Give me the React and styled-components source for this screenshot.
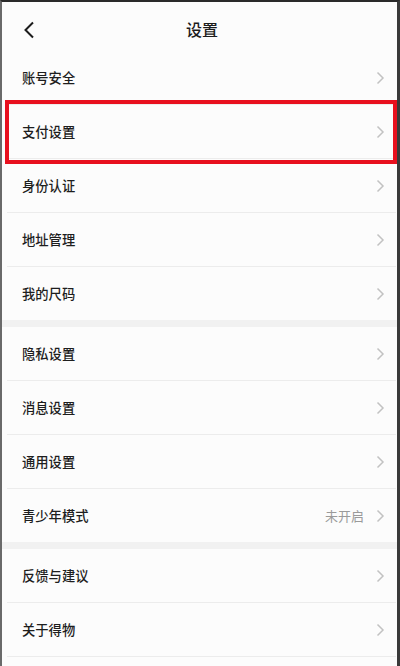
import React from 'react';
import styled, { createGlobalStyle } from 'styled-components';

const GlobalStyle = createGlobalStyle`
  html, body {
    margin: 0;
    padding: 0;
    background: #fcfcfc;
  }
  body {
    font-family: "Noto Sans CJK SC", "Noto Sans", sans-serif;
  }
`;

const Frame = styled.div`
  position: relative;
  width: 400px;
  height: 666px;
  box-sizing: border-box;
  overflow: hidden;
  border-top: 2px solid #2a2a2a;
  border-left: 2px solid #6a6a6a;
  border-right: 3px solid #3a3a3a;
  background: #fcfcfc;
`;

const Header = styled.div`
  height: 49px;
  display: flex;
  align-items: center;
  justify-content: center;
  position: relative;
`;

const BackButton = styled.div`
  position: absolute;
  left: 21px;
  top: 18px;
  width: 14px;
  height: 20px;
  display: flex;
  align-items: center;
`;

const Title = styled.h1`
  margin: 5px 0 0 5px;
  font-size: 16px;
  font-weight: 500;
  color: #1c1c1c;
`;

const Group = styled.div`
  background: #fcfcfc;
`;

const Gap = styled.div`
  height: 7px;
  background: #f1f1f1;
`;

const Row = styled.div`
  position: relative;
  height: 53px;
  display: flex;
  align-items: center;
  padding: 0 11px 0 15px;
  border-bottom: 1px solid #ececec;
  margin: 0 1px 0 5px;

  &:last-child {
    border-bottom: ${p => (p.$lastLine ? '1px solid #ececec' : 'none')};
  }
`;

const Highlight = styled.div`
  position: absolute;
  left: -2px;
  right: -1px;
  top: -5px;
  bottom: -6px;
  border: 4px solid #e8101e;
  pointer-events: none;
`;

const Label = styled.span`
  flex: 1;
  font-size: 13.3px;
  font-weight: 500;
  color: #1e1e1e;
`;

const Value = styled.span`
  font-size: 13px;
  color: #9a9a9a;
  margin-right: 12px;
`;

const Chevron = () => (
  <svg width="9" height="14" viewBox="0 0 9 14">
    <polyline points="1.5,1.5 7,7 1.5,12.5" fill="none" stroke="#c2c2c2" strokeWidth="1.5" />
  </svg>
);

const groups = [
  [
    { label: '账号安全' },
    { label: '支付设置', highlight: true },
    { label: '身份认证' },
    { label: '地址管理' },
    { label: '我的尺码' },
  ],
  [
    { label: '隐私设置' },
    { label: '消息设置' },
    { label: '通用设置' },
    { label: '青少年模式', value: '未开启' },
  ],
  [
    { label: '反馈与建议' },
    { label: '关于得物' },
  ],
];

export default function App() {
  return (
    <>
      <GlobalStyle />
      <Frame>
        <Header>
          <BackButton>
            <svg width="12" height="18" viewBox="0 0 12 18">
              <polyline points="10,1.5 2.5,9 10,16.5" fill="none" stroke="#1c1c1c" strokeWidth="2" />
            </svg>
          </BackButton>
          <Title>设置</Title>
        </Header>
        {groups.map((items, gi) => (
          <React.Fragment key={gi}>
            {gi > 0 && <Gap />}
            <Group>
              {items.map(item => (
                <Row key={item.label} $lastLine={gi === groups.length - 1}>
                  <Label>{item.label}</Label>
                  {item.value && <Value>{item.value}</Value>}
                  <Chevron />
                  {item.highlight && <Highlight />}
                </Row>
              ))}
            </Group>
          </React.Fragment>
        ))}
      </Frame>
    </>
  );
}
